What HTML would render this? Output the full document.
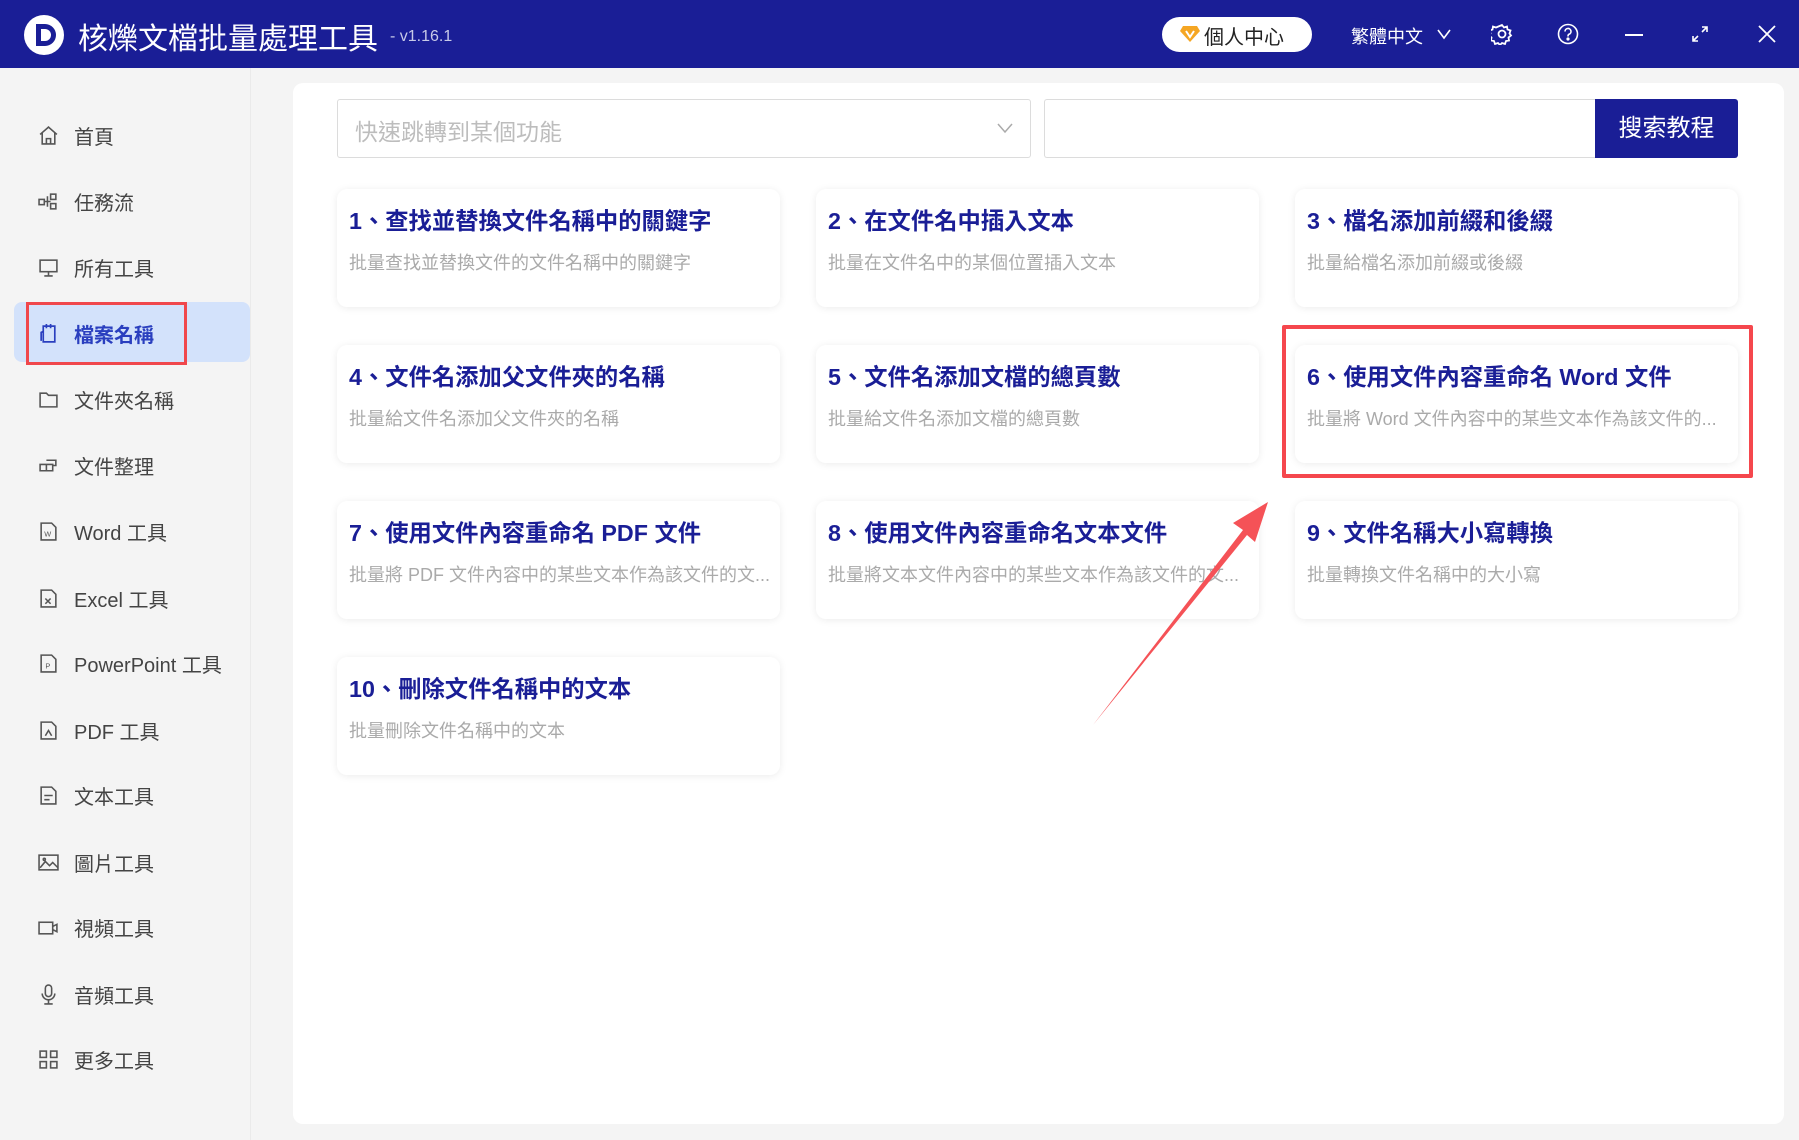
<!DOCTYPE html>
<html><head><meta charset="utf-8"><style>
*{margin:0;padding:0;box-sizing:border-box}
body{width:1799px;height:1140px;background:#f4f4f4;font-family:"Liberation Sans","Noto Sans CJK TC",sans-serif;position:relative;overflow:hidden}
.hdr{position:absolute;left:0;top:0;width:1799px;height:68px;background:#1a1e96}
.abs{position:absolute}
.side{position:absolute;left:0;top:68px;width:251px;height:1072px;border-right:1px solid #eaeaea}
.it{position:absolute;left:38px;height:30px;display:flex;align-items:center;font-size:20px;color:#444}
.it svg{width:21px;height:21px;margin-right:15px}
.main{position:absolute;left:293px;top:83px;width:1491px;height:1041px;background:#fff;border-radius:10px}
.card{position:absolute;width:443px;height:118px;background:#fff;border-radius:10px;box-shadow:0 1px 8px rgba(0,0,0,0.08);padding-left:12px}
.card h3{position:absolute;left:12px;top:13px;font-size:23.3px;color:#1a1e96;font-weight:bold;white-space:nowrap}
.card p{position:absolute;left:12px;top:60px;font-size:18px;color:#aaa;white-space:nowrap}
</style></head><body>
<div class="hdr"></div>
<svg class="abs" style="left:22px;top:13px" width="44" height="44"><circle cx="22" cy="22" r="20" fill="#fff"/><path d="M14 11h9a11 11 0 0 1 0 22h-9z" fill="#1a1e96"/><path d="M19 16h4a6 6 0 0 1 0 12h-4z" fill="#fff"/></svg>
<div class="abs" style="left:78px;top:14px;font-size:30px;color:#fff">核爍文檔批量處理工具</div>
<div class="abs" style="left:390px;top:28px;font-size:16px;color:#c8cae8">- v1.16.1</div>
<div class="abs" style="left:1162px;top:17px;width:150px;height:35px;background:#fff;border-radius:18px"></div>
<svg class="abs" style="left:1180px;top:25px" width="20" height="18"><path d="M3 1h14l3 5-10 11L0 6z" fill="#f5a623"/><path d="M6 6l4 6 4-6" stroke="#fff" stroke-width="2" fill="none"/></svg>
<div class="abs" style="left:1204px;top:21px;font-size:20px;color:#222">個人中心</div>
<div class="abs" style="left:1351px;top:23px;font-size:18px;color:#fff">繁體中文</div>
<svg class="abs" style="left:1436px;top:27px" width="16" height="14"><path d="M2 3l6 8 6-8" stroke="#fff" stroke-width="1.6" fill="none"/></svg>
<svg class="abs" style="left:1491px;top:23px" width="22" height="22" fill="none" stroke="#fff" stroke-width="1.8"><circle cx="11" cy="11" r="3.5"/><path d="M11 2l2 2.5 3-1 .5 3 3 1-1 3 1.5 2-2.5 2 .5 3-3 .5-1 3-3-1-2 2-2-2-3 1-1-3-3-.5.5-3-2.5-2 1.5-2-1-3 3-1 .5-3 3 1z"/></svg>
<svg class="abs" style="left:1557px;top:23px" width="22" height="22" fill="none" stroke="#fff" stroke-width="1.6"><circle cx="11" cy="11" r="9.5"/><path d="M8 8.5a3 3 0 1 1 4 2.8c-1 .4-1 1-1 2.2"/><circle cx="11" cy="16" r=".8" fill="#fff"/></svg>
<div class="abs" style="left:1625px;top:34px;width:18px;height:2px;background:#fff"></div>
<svg class="abs" style="left:1691px;top:25px" width="18" height="18" stroke="#fff" stroke-width="1.6" fill="none"><path d="M2 16l5-5M16 2l-5 5M2 11v5h5M16 7V2h-5"/></svg>
<svg class="abs" style="left:1758px;top:25px" width="18" height="18" stroke="#fff" stroke-width="1.8"><path d="M1 1l16 16M17 1L1 17"/></svg>

<div class="side"></div>
<div class="abs" style="left:14px;top:302px;width:236px;height:60px;background:#d3e2fb;border-radius:8px"></div>
<div class="abs" style="left:26px;top:302px;width:161px;height:63px;border:3px solid #f0474c"></div>
<div class="it" style="top:120px"><svg viewBox="0 0 20 20" fill="none" stroke="#555" stroke-width="1.5"><path d="M2 9l8-7 8 7M4 7v11h12V7M8 18v-5h4v5"/></svg>首頁</div>
<div class="it" style="top:186px"><svg viewBox="0 0 20 20" fill="none" stroke="#555" stroke-width="1.5"><rect x="1" y="8" width="5" height="5"/><rect x="12" y="3" width="5" height="5"/><rect x="12" y="12" width="5" height="5"/><path d="M6 10h6M9 5v10"/></svg>任務流</div>
<div class="it" style="top:252px"><svg viewBox="0 0 20 20" fill="none" stroke="#555" stroke-width="1.5"><rect x="2" y="3" width="16" height="11"/><path d="M10 14v4M6 18h8"/></svg>所有工具</div>
<div class="it" style="top:318px;color:#2a3fbf;font-weight:bold"><svg viewBox="0 0 20 20" fill="none" stroke="#2a3fbf" stroke-width="1.6"><path d="M5 3h11v15H5zM8 1v4M12 1v4M5 8l-2 1v8"/></svg>檔案名稱</div>
<div class="it" style="top:384px"><svg viewBox="0 0 20 20" fill="none" stroke="#555" stroke-width="1.5"><path d="M2 4h6l2 2h8v11H2z"/></svg>文件夾名稱</div>
<div class="it" style="top:450px"><svg viewBox="0 0 20 20" fill="none" stroke="#555" stroke-width="1.5"><path d="M2 9h12v6H2zM8 9v6M8 5h9v5h-3"/></svg>文件整理</div>
<div class="it" style="top:516px"><svg viewBox="0 0 20 20" fill="none" stroke="#555" stroke-width="1.5"><path d="M3 2h10l4 4v12H3z"/><text x="6" y="15" font-size="7" fill="#555" stroke="none">W</text></svg>Word 工具</div>
<div class="it" style="top:583px"><svg viewBox="0 0 20 20" fill="none" stroke="#555" stroke-width="1.5"><path d="M3 2h10l4 4v12H3zM7 10l5 5M12 10l-5 5"/></svg>Excel 工具</div>
<div class="it" style="top:648px"><svg viewBox="0 0 20 20" fill="none" stroke="#555" stroke-width="1.5"><path d="M3 2h10l4 4v12H3z"/><text x="7" y="15" font-size="7" fill="#555" stroke="none">P</text></svg>PowerPoint 工具</div>
<div class="it" style="top:715px"><svg viewBox="0 0 20 20" fill="none" stroke="#555" stroke-width="1.5"><path d="M3 2h10l4 4v12H3zM7 15l3-5 3 5"/></svg>PDF 工具</div>
<div class="it" style="top:780px"><svg viewBox="0 0 20 20" fill="none" stroke="#555" stroke-width="1.5"><path d="M3 2h10l4 4v12H3zM6 10h8M6 14h5"/></svg>文本工具</div>
<div class="it" style="top:847px"><svg viewBox="0 0 20 20" fill="none" stroke="#555" stroke-width="1.5"><rect x="1" y="3" width="18" height="14"/><path d="M2 15l5-6 4 4 3-3 5 5"/><circle cx="6" cy="7" r="1"/></svg>圖片工具</div>
<div class="it" style="top:912px"><svg viewBox="0 0 20 20" fill="none" stroke="#555" stroke-width="1.5"><rect x="1" y="5" width="13" height="11"/><path d="M14 9l4-2v7l-4-2"/></svg>視頻工具</div>
<div class="it" style="top:979px"><svg viewBox="0 0 20 20" fill="none" stroke="#555" stroke-width="1.5"><rect x="7" y="1" width="6" height="11" rx="3"/><path d="M4 9a6 6 0 0 0 12 0M10 15v4M6 19h8"/></svg>音頻工具</div>
<div class="it" style="top:1044px"><svg viewBox="0 0 20 20" fill="none" stroke="#555" stroke-width="1.5"><rect x="2" y="2" width="6" height="6"/><rect x="12" y="2" width="6" height="6"/><rect x="2" y="12" width="6" height="6"/><rect x="12" y="12" width="6" height="6"/></svg>更多工具</div>

<div class="main"></div>
<div class="abs" style="left:337px;top:99px;width:694px;height:59px;border:1px solid #dcdcdc;border-radius:3px"></div>
<div class="abs" style="left:355px;top:113px;font-size:23px;color:#bdbdbd">快速跳轉到某個功能</div>
<svg class="abs" style="left:996px;top:121px" width="18" height="14"><path d="M2 3l7 8 7-8" stroke="#aaa" stroke-width="1.5" fill="none"/></svg>
<div class="abs" style="left:1044px;top:99px;width:552px;height:59px;border:1px solid #dcdcdc;border-right:none;border-radius:3px 0 0 3px"></div>
<div class="abs" style="left:1595px;top:99px;width:143px;height:59px;background:#1a1e96;border-radius:0 3px 3px 0;color:#fff;font-size:24px;text-align:center;line-height:59px">搜索教程</div>

<div class="card" style="left:337px;top:189px"><h3>1、查找並替換文件名稱中的關鍵字</h3><p>批量查找並替換文件的文件名稱中的關鍵字</p></div>
<div class="card" style="left:816px;top:189px"><h3>2、在文件名中插入文本</h3><p>批量在文件名中的某個位置插入文本</p></div>
<div class="card" style="left:1295px;top:189px"><h3>3、檔名添加前綴和後綴</h3><p>批量給檔名添加前綴或後綴</p></div>
<div class="card" style="left:337px;top:345px"><h3>4、文件名添加父文件夾的名稱</h3><p>批量給文件名添加父文件夾的名稱</p></div>
<div class="card" style="left:816px;top:345px"><h3>5、文件名添加文檔的總頁數</h3><p>批量給文件名添加文檔的總頁數</p></div>
<div class="card" style="left:1295px;top:345px"><h3>6、使用文件內容重命名 Word 文件</h3><p>批量將 Word 文件內容中的某些文本作為該文件的...</p></div>
<div class="card" style="left:337px;top:501px"><h3>7、使用文件內容重命名 PDF 文件</h3><p>批量將 PDF 文件內容中的某些文本作為該文件的文...</p></div>
<div class="card" style="left:816px;top:501px"><h3>8、使用文件內容重命名文本文件</h3><p>批量將文本文件內容中的某些文本作為該文件的文...</p></div>
<div class="card" style="left:1295px;top:501px"><h3>9、文件名稱大小寫轉換</h3><p>批量轉換文件名稱中的大小寫</p></div>
<div class="card" style="left:337px;top:657px"><h3>10、刪除文件名稱中的文本</h3><p>批量刪除文件名稱中的文本</p></div>

<div class="abs" style="left:1282px;top:325px;width:471px;height:153px;border:4px solid #f5474d;border-radius:2px"></div>
<svg class="abs" style="left:0;top:0" width="1799" height="1140"><path d="M1093 725L1243 530L1233 523L1268 502L1255 542L1247 535Z" fill="#f55257"/></svg>
</body></html>
